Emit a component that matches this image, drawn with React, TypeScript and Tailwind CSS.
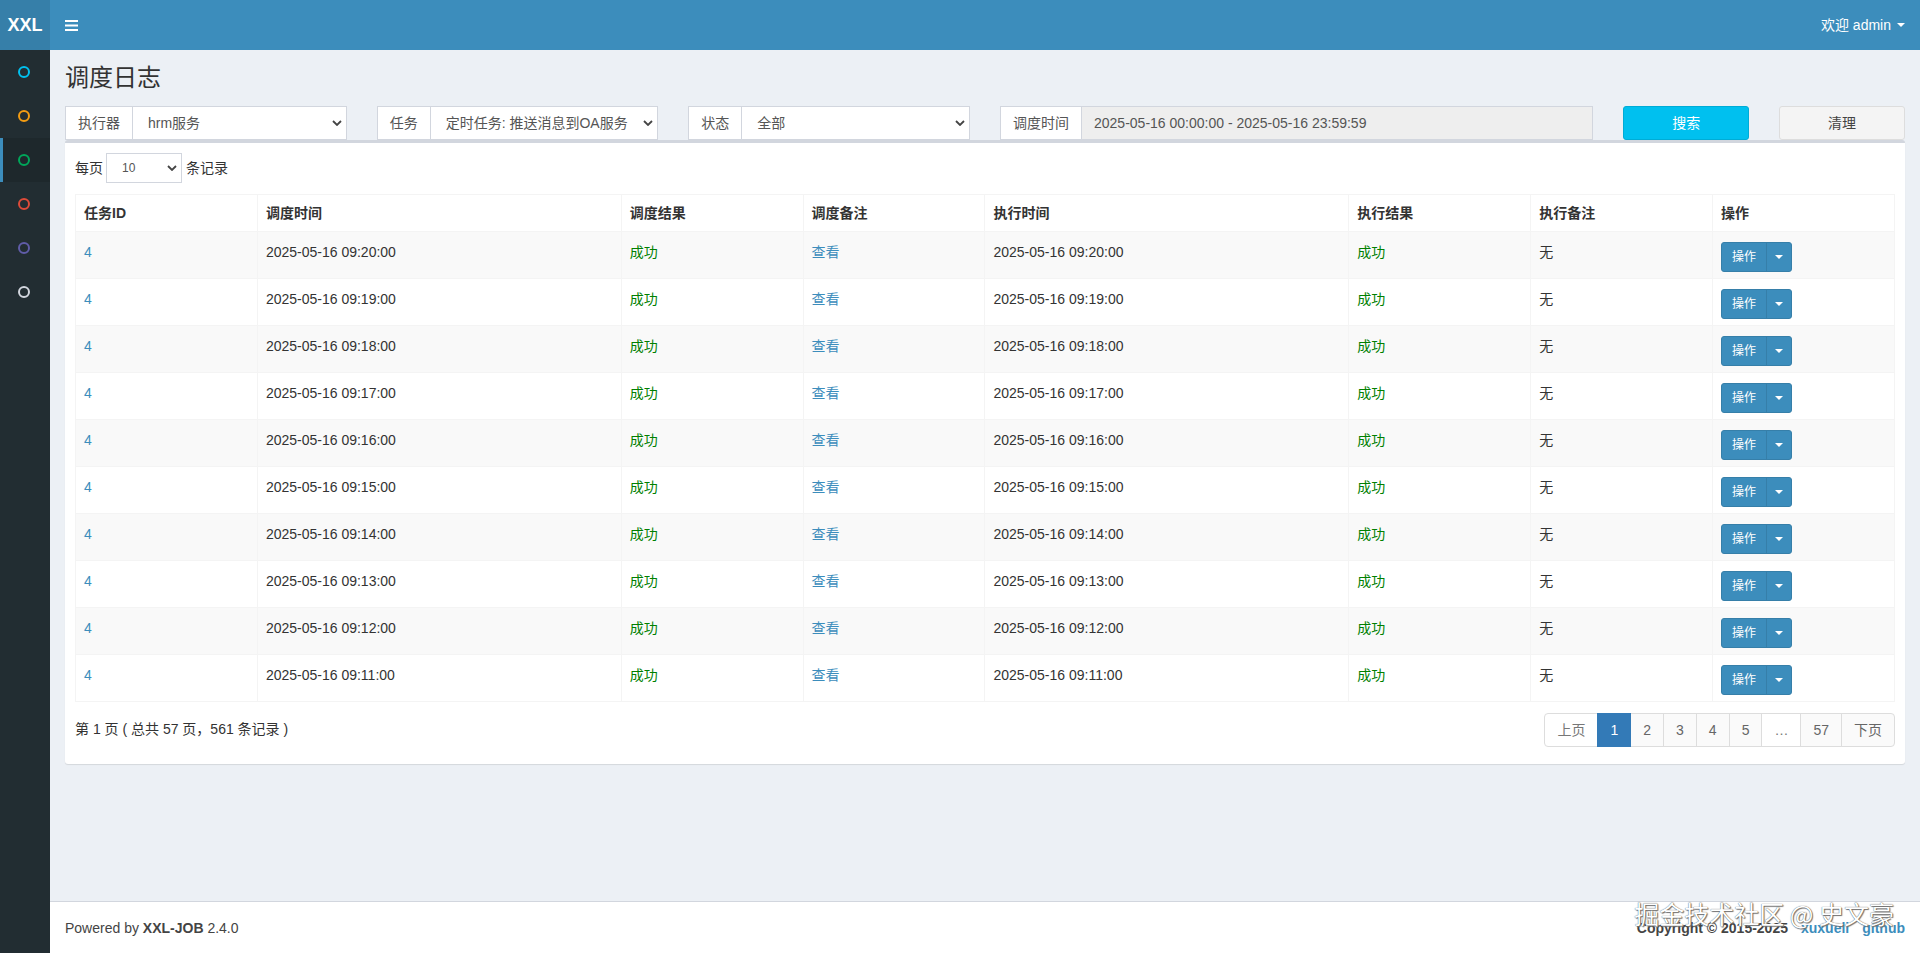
import React from "react";

const Chevron = () => (
  <svg width="10" height="6" viewBox="0 0 10 6" className="shrink-0">
    <path d="M1 1l4 4 4-4" fill="none" stroke="#444" strokeWidth="1.8" />
  </svg>
);

const Ring = ({ color }: { color: string }) => (
  <svg width="12" height="12" viewBox="0 0 12 12">
    <circle cx="6" cy="6" r="5" fill="none" stroke={color} strokeWidth="2" />
  </svg>
);

const Addon = ({ children }: { children: React.ReactNode }) => (
  <span className="flex items-center px-[12px] border border-[#d2d6de] border-r-0 bg-white text-[#555] whitespace-nowrap">
    {children}
  </span>
);

const FakeSelect = ({ value }: { value: string }) => (
  <div className="flex-1 min-w-0 flex items-center justify-between border border-[#d2d6de] bg-white pl-[15px] pr-[4px] text-[#555]">
    <span className="truncate">{value}</span>
    <Chevron />
  </div>
);

const sideColors = ["#00c0ef", "#f39c12", "#00a65a", "#dd4b39", "#605ca8", "#d2d6de"];

const headers = ["任务ID", "调度时间", "调度结果", "调度备注", "执行时间", "执行结果", "执行备注", "操作"];
const widths = ["w-[10%]", "w-[20%]", "w-[10%]", "w-[10%]", "w-[20%]", "w-[10%]", "w-[10%]", "w-[10%]"];

const times = ["20", "19", "18", "17", "16", "15", "14", "13", "12", "11"].map(
  (m) => `2025-05-16 09:${m}:00`
);

const pages: { label: string; kind: "disabled" | "active" | "normal" }[] = [
  { label: "上页", kind: "disabled" },
  { label: "1", kind: "active" },
  { label: "2", kind: "normal" },
  { label: "3", kind: "normal" },
  { label: "4", kind: "normal" },
  { label: "5", kind: "normal" },
  { label: "…", kind: "disabled" },
  { label: "57", kind: "normal" },
  { label: "下页", kind: "normal" },
];

export default function App() {
  const td = "px-[8px] pt-[10px] pb-[6px] leading-[20px] align-top border border-[#f4f4f4]";
  return (
    <div className="min-h-[953px] flex flex-col font-['Liberation_Sans','Noto_Sans_CJK_SC',sans-serif] text-[14px] leading-[20px] text-[#333]">
      {/* header */}
      <header className="h-[50px] flex bg-[#3c8dbc] shrink-0">
        <div className="w-[50px] bg-[#367fa9] flex items-center justify-center text-white font-bold text-[18px]">
          XXL
        </div>
        <div className="flex-1 flex items-center justify-between">
          <div className="h-full flex items-center px-[15px]">
            <svg width="13" height="11" viewBox="0 0 13 11">
              <rect x="0" y="0" width="13" height="2" fill="#fff" />
              <rect x="0" y="4.5" width="13" height="2" fill="#fff" />
              <rect x="0" y="9" width="13" height="2" fill="#fff" />
            </svg>
          </div>
          <div className="h-full flex items-center px-[15px] text-white">
            <span>欢迎 admin</span>
            <span className="ml-[6px] w-0 h-0 border-x-[4px] border-x-transparent border-t-[4px] border-t-white" />
          </div>
        </div>
      </header>

      <div className="flex flex-1">
        {/* sidebar */}
        <aside className="w-[50px] bg-[#222d32] shrink-0">
          {sideColors.map((c, i) =>
            i === 2 ? (
              <div key={i} className="h-[44px] flex items-center pl-[15px] border-l-[3px] border-[#3c8dbc] bg-[#1e282c]">
                <Ring color={c} />
              </div>
            ) : (
              <div key={i} className="h-[44px] flex items-center pl-[18px]">
                <Ring color={c} />
              </div>
            )
          )}
        </aside>

        {/* content wrapper */}
        <div className="flex-1 flex flex-col bg-[#ecf0f5] min-w-0">
          <main className="flex-1">
            <section className="px-[15px] pt-[15px]">
              <h1 className="text-[24px] leading-[1.1] font-normal text-[#333]">调度日志</h1>
            </section>
            <section className="p-[15px]">
              {/* filters */}
              <div className="grid grid-cols-12 gap-x-[30px]">
                <div className="col-span-2 flex h-[34px]">
                  <Addon>执行器</Addon>
                  <FakeSelect value="hrm服务" />
                </div>
                <div className="col-span-2 flex h-[34px]">
                  <Addon>任务</Addon>
                  <FakeSelect value="定时任务: 推送消息到OA服务" />
                </div>
                <div className="col-span-2 flex h-[34px]">
                  <Addon>状态</Addon>
                  <FakeSelect value="全部" />
                </div>
                <div className="col-span-4 flex h-[34px]">
                  <Addon>调度时间</Addon>
                  <div className="flex-1 min-w-0 flex items-center border border-[#d2d6de] bg-[#eee] px-[12px] text-[#555] whitespace-nowrap">
                    2025-05-16 00:00:00 - 2025-05-16 23:59:59
                  </div>
                </div>
                <div className="col-span-1 h-[34px]">
                  <div className="h-full flex items-center justify-center rounded-[3px] bg-[#00c0ef] border border-[#00acd6] text-white">
                    搜索
                  </div>
                </div>
                <div className="col-span-1 h-[34px]">
                  <div className="h-full flex items-center justify-center rounded-[3px] bg-[#f4f4f4] border border-[#ddd] text-[#444]">
                    清理
                  </div>
                </div>
              </div>

              {/* box */}
              <div className="bg-white border-t-[3px] border-[#d2d6de] rounded-[3px] shadow-[0_1px_1px_rgba(0,0,0,0.1)] mb-[20px]">
                <div className="p-[10px] pb-[15px]">
                  <div className="flex items-center h-[30px] mb-[11px]">
                    <span>每页</span>
                    <div className="ml-[3px] w-[76px] h-[30px] flex items-center justify-between border border-[#d2d6de] pl-[15px] pr-[4px] text-[12px] text-[#555]">
                      <span>10</span>
                      <Chevron />
                    </div>
                    <span className="ml-[4px]">条记录</span>
                  </div>

                  <table className="w-full table-fixed border-collapse border border-[#f4f4f4]">
                    <thead>
                      <tr>
                        {headers.map((h, i) => (
                          <th
                            key={h}
                            className={`${widths[i]} text-left font-bold px-[8px] py-[8px] leading-[20px] border border-[#f4f4f4]`}
                          >
                            {h}
                          </th>
                        ))}
                      </tr>
                    </thead>
                    <tbody>
                      {times.map((t, i) => (
                        <tr key={t} className={i % 2 === 0 ? "bg-[#f9f9f9]" : "bg-white"}>
                          <td className={`${td} text-[#3c8dbc]`}>4</td>
                          <td className={td}>{t}</td>
                          <td className={`${td} text-[#008000]`}>成功</td>
                          <td className={`${td} text-[#3c8dbc]`}>查看</td>
                          <td className={td}>{t}</td>
                          <td className={`${td} text-[#008000]`}>成功</td>
                          <td className={td}>无</td>
                          <td className={td}>
                            <div className="inline-flex h-[30px] rounded-[3px] border border-[#367fa9] bg-[#3c8dbc] text-white text-[12px]">
                              <span className="flex items-center px-[10px]">操作</span>
                              <span className="flex items-center px-[8px] border-l border-[#367fa9]">
                                <span className="w-0 h-0 border-x-[4px] border-x-transparent border-t-[4px] border-t-white" />
                              </span>
                            </div>
                          </td>
                        </tr>
                      ))}
                    </tbody>
                  </table>

                  <div className="mt-[9px] flex justify-between items-start">
                    <div className="pt-[8px]">第 1 页 ( 总共 57 页，561 条记录 )</div>
                    <ul className="flex my-[2px]">
                      {pages.map((p, i) => {
                        const base = "px-[12px] py-[6px] leading-[20px] border";
                        const round =
                          i === 0 ? " rounded-l-[4px]" : i === pages.length - 1 ? " rounded-r-[4px] -ml-px" : " -ml-px";
                        const kind =
                          p.kind === "active"
                            ? " bg-[#337ab7] border-[#337ab7] text-white relative"
                            : p.kind === "disabled"
                            ? " bg-white border-[#ddd] text-[#777]"
                            : " bg-[#fafafa] border-[#ddd] text-[#666]";
                        return (
                          <li key={p.label} className={base + round + kind}>
                            {p.label}
                          </li>
                        );
                      })}
                    </ul>
                  </div>
                </div>
              </div>
            </section>
          </main>

          {/* footer */}
          <footer className="relative bg-white border-t border-[#d2d6de] px-[15px] pt-[16px] pb-[15px] leading-[20px] text-[#444] flex justify-between">
            <div>
              Powered by <b>XXL-JOB</b> 2.4.0
            </div>
            <div className="font-bold">
              Copyright © 2015-2025
              <a className="ml-[13px] text-[#3c8dbc]">xuxueli</a>
              <a className="ml-[13px] text-[#3c8dbc]">github</a>
            </div>
            <div className="absolute right-[26px] top-[-1px] text-[25px] leading-[25px] text-white font-['Noto_Sans_CJK_SC',sans-serif] whitespace-nowrap [text-shadow:0_0_1px_#333,1px_1px_1px_#777]">
              掘金技术社区 @ 史文豪
            </div>
          </footer>
        </div>
      </div>
    </div>
  );
}
